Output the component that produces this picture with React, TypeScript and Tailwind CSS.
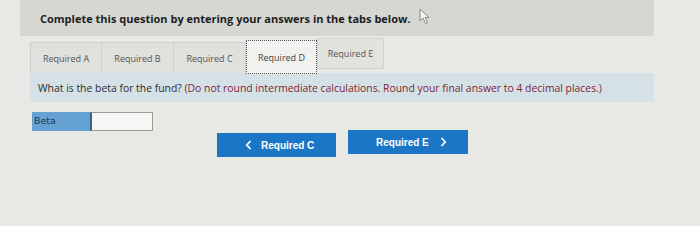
import React from "react";

function Cursor() {
  return (
    <svg width="12" height="17" viewBox="0 0 12 17" className="ml-[8px] -mt-[6px]">
      <path d="M1 1 L1 13 L4 10 L6.5 15.5 L8.5 14.5 L6 9.5 L10 9.5 Z" fill="#f4f4f2" stroke="#8a8a88" strokeWidth="1" strokeLinejoin="round" />
    </svg>
  );
}

function Chevron({ dir }: { dir: "l" | "r" }) {
  return (
    <svg width="7" height="10" viewBox="0 0 7 10">
      <path d={dir === "l" ? "M5.5 1 L1.8 5 L5.5 9" : "M1.5 1 L5.2 5 L1.5 9"} fill="none" stroke="#fff" strokeWidth="1.8" />
    </svg>
  );
}

export default function App() {
  const tabs = ["Required A", "Required B", "Required C", "Required D", "Required E"];
  return (
    <div className="w-[700px] h-[226px] bg-[#e8e8e5] overflow-hidden font-['Open_Sans',sans-serif]">
      <div className="ml-[20px] w-[634px] h-[36px] bg-[#d6d6d2] flex items-center pl-[20px] pt-[2px]">
        <span className="text-[11px] font-bold text-[#1e1e1e]">
          Complete this question by entering your answers in the tabs below.
        </span>
        <Cursor />
      </div>
      <div className="ml-[30px] mt-[6px] flex h-[31px]">
        {tabs.map((t, i) => {
          const active = i === 3;
          return (
            <div
              key={t}
              className={
                active
                  ? "w-[71px] flex items-center justify-center bg-[#f1f1ef] border border-dotted border-[#555] text-[9px] text-[#444] -mt-[2px] h-[34px] pt-[2px]"
                  : i === 4
                  ? "w-[67px] h-[31px] flex items-center justify-center bg-[#e2e2df] border border-[#d2d2cf] text-[9px] text-[#555] -mt-[4px]"
                  : "w-[72px] h-[31px] flex items-center justify-center bg-[#e0e0dd] border-r border-t border-[#cfcfcc] first:border-l text-[9px] text-[#555] pt-[2px]"
              }
            >
              {t}
            </div>
          );
        })}
      </div>
      <div className="ml-[30px] w-[624px] h-[29px] bg-[#d4e2e7] flex items-end pl-[8px] pb-[5px] text-[10.4px] whitespace-nowrap">
        <span className="text-[#2c2c2c]">What is the beta for the fund?&nbsp;</span>
        <span className="text-[#7c2430]">(Do not round intermediate calculations. Round your final answer to 4 decimal places.)</span>
      </div>
      <div className="ml-[32px] mt-[10px] flex h-[19px]">
        <div className="w-[58px] bg-[#66a1d4] text-[9.5px] text-[#1f3550] flex items-center pl-[2px] font-['DejaVu_Sans',sans-serif]">Beta</div>
        <div className="w-[63px] bg-[#f7f7f5] border border-[#9a9a98] border-l-2 border-l-[#3a5f8a]"></div>
      </div>
      <div className="ml-[217px] -mt-[1px] flex items-start gap-[12px] font-['Liberation_Sans',sans-serif]">
        <div className="mt-[3px] w-[119px] h-[24px] bg-[#1c76c6] flex items-center pl-[28px] gap-[9px] text-white text-[10px] font-bold">
          <Chevron dir="l" />
          <span>Required C</span>
        </div>
        <div className="w-[120px] h-[24px] bg-[#1c76c6] flex items-center pl-[28px] gap-[11px] text-white text-[10px] font-bold">
          <span>Required E</span>
          <Chevron dir="r" />
        </div>
      </div>
    </div>
  );
}
